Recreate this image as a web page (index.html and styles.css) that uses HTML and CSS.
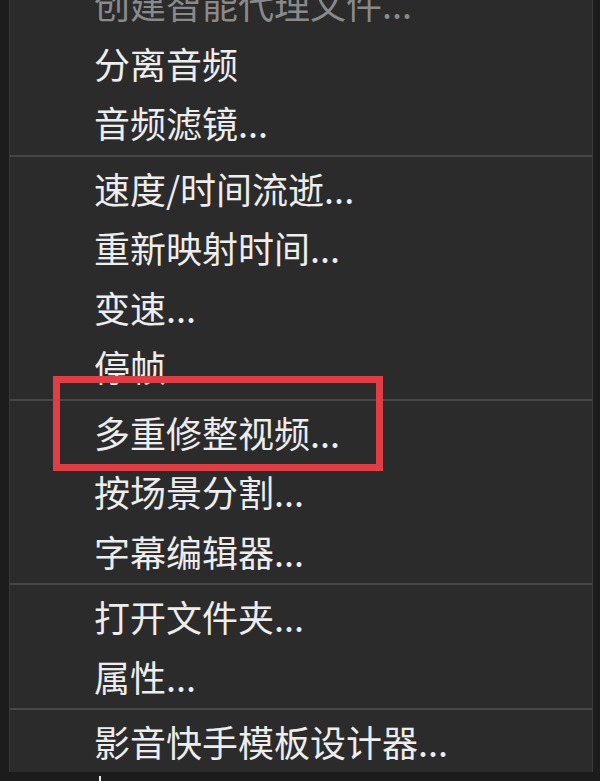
FILE: index.html
```html
<!DOCTYPE html>
<html lang="zh-CN">
<head>
  <meta charset="UTF-8" />
  <meta name="viewport" content="width=device-width, initial-scale=1.0" />
  <title>右键菜单</title>
  <link rel="stylesheet" href="styles.css">
</head>
<body>
  <div class="menu">
    <div class="item disabled">创建智能代理文件...</div>
    <div class="item">分离音频</div>
    <div class="item">音频滤镜...</div>
    <div class="sep"></div>
    <div class="item">速度/时间流逝...</div>
    <div class="item">重新映射时间...</div>
    <div class="item">变速...</div>
    <div class="item">停帧...</div>
    <div class="sep"></div>
    <div class="item marked">多重修整视频...<span class="mark"></span></div>
    <div class="item">按场景分割...</div>
    <div class="item">字幕编辑器...</div>
    <div class="sep"></div>
    <div class="item">打开文件夹...</div>
    <div class="item">属性...</div>
    <div class="sep"></div>
    <div class="item">影音快手模板设计器...</div>
  </div>
  <div class="below"><span class="caret"></span></div>
</body>
</html>
```

FILE: styles.css
```css
html, body { margin: 0; padding: 0; }
body { background: #1c1c1c; font-family: "Noto Sans CJK SC", "Noto Sans", sans-serif; overflow: hidden; }
.menu { margin: -26px 7px 0 9px; background: #2b2b2b; border-left: 1px solid #3a3a3a; border-right: 1px solid #3a3a3a; }
.item { position: relative; height: 59.5px; line-height: 59.5px; padding-left: 84px; font-size: 36px; color: #ededed; white-space: nowrap; }
.item.disabled { color: #8a8a8a; }
.sep { height: 2px; margin: 2px 0; background: #474747; }
.mark { position: absolute; left: 43px; top: -27px; width: 330px; height: 95px; box-sizing: border-box; border: 7px solid #de3f46; }
.below { height: 10px; padding-left: 99px; }
.caret { display: block; width: 2px; height: 6px; margin-top: 4px; background: #e8e8e8; }
```
